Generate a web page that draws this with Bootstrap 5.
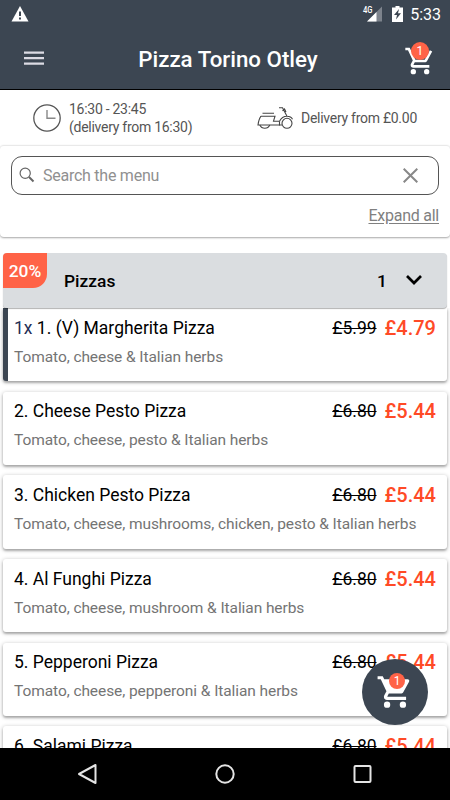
<!DOCTYPE html>
<html lang="en">
<head>
<meta charset="utf-8">
<meta name="viewport" content="width=device-width, initial-scale=1">
<title>Pizza Torino Otley</title>
<link href="https://cdn.jsdelivr.net/npm/bootstrap@5.3.0/dist/css/bootstrap.min.css" rel="stylesheet">
<style>
  body { font-family: Roboto, "Liberation Sans", sans-serif; color: #000; line-height: 1; }
  svg { display: block; flex: none; }
  .screen { width: 450px; height: 800px; background: #fff; }
  .topbar { height: 90px; background: #3c4652; border-bottom: 1px solid #000; }
  .status { height: 28px; padding: 0 9px 0 11px; font-size: 16px; }
  .clock { margin-left: 7px; line-height: 18px; padding-top: 1px; }
  .titlebar { height: 61px; padding: 0 14px 0 24px; }
  .title { font-size: 22.3px; font-weight: 500; line-height: 26px; padding: 1px 0 0 8px; }
  .cart-count { background: #ff6347; color: #fff; font-size: 12px; width: 18px; height: 18px; }
  .info { height: 55px; color: #555; font-size: 14px; letter-spacing: -.27px; line-height: 18px; padding: 0 33px; }
  .finder { height: 92px; padding: 10px 11px 0; border: solid #e9e9e9; border-width: 1px 0 0; border-radius: 4px; box-shadow: 0 1px 2px rgba(0,0,0,.35); }
  .search { height: 39px; border: 1px solid #555; border-radius: 11px; padding: 0 20px 0 7px; color: #909090; font-size: 16px; letter-spacing: -.25px; }
  .search .lens { margin-bottom: 2px; }
  .expand { color: #808080; font-size: 16px; letter-spacing: -.25px; line-height: 20px; margin-top: 11px; text-underline-offset: 2px; }
  .category { margin: 16px 3px 0; height: 55px; background: #dadde0; border-radius: 4px; padding: 2px 24px 0 61px; font-size: 17.400px; font-weight: 500; box-shadow: 0 1px 1px rgba(0,0,0,.3); z-index: 1; }
  .category svg { margin-top: -2px; }
  .discount { background: #ff6347; width: 44px; height: 35px; border-radius: 4px 0 14px 0; padding-top: 3px; }
  .menu { padding: 0 3px; gap: 10.3px; height: 440px; }
  .dish { flex: none; height: 73.4px; padding: 9.700px 11px 0 11px; border-radius: 3px; box-shadow: 0 1px 4px rgba(0,0,0,.3), 0 2px 2px rgba(0,0,0,.18); background: #fff; }
  .dish.chosen { border-left: 5px solid #3c4652; padding-left: 6px; border-radius: 0 0 3px 3px; }
  .dish-name { font-size: 17.500px; line-height: 20px; }
  .dish-info { font-size: 15.500px; line-height: 20px; margin-top: 9px; color: #747474; letter-spacing: -.08px; white-space: nowrap; }
  .qty { color: #1f2f55; }
  .now { font-size: 20px; font-weight: 500; color: #ff4a26; margin-left: 8px; }
  .fab { width: 66px; height: 66px; left: 362px; top: 659px; background: #3c4652; z-index: 3; }
  .fab .cart-count { width: 16px; height: 16px; left: 27px; top: 14px; }
  .bar-cart .cart-count { left: 7px; top: -3px; }
  .navkeys { height: 52px; z-index: 2; padding: 0 77px; }
</style>
<script src="https://cdn.jsdelivr.net/npm/bootstrap@5.3.0/dist/js/bootstrap.bundle.min.js"></script>
</head>
<body>
<div class="screen position-relative overflow-hidden d-flex flex-column">
  <header class="topbar text-white flex-shrink-0">
    <div class="status d-flex align-items-center justify-content-between">
      <svg width="18" height="16" viewBox="0 0 18 16"><path fill="#fff" d="M9 0 17.5 15.5H.5Z"/><path stroke="#3c4652" stroke-width="2" d="M9 5.5v4.5M9 11.5v2"/></svg>
      <div class="d-flex align-items-center">
        <svg width="24" height="18" viewBox="-2 0 24 18"><path fill="#7d838c" d="M20 1.500v15H5Z"/><path fill="#fff" d="M14.500 7v9.500H5Z"/><text x="1" y="8" font-size="8.500" font-weight="500" textLength="9.500" lengthAdjust="spacingAndGlyphs" fill="#fff" stroke="#3c4652" stroke-width="1" paint-order="stroke">4G</text></svg>
        <svg class="ms-2" width="11" height="16" viewBox="0 0 11 16"><path fill="#fff" d="M3.500 0h4v1.500H11V16H0V1.500h3.500Z"/><path fill="#3c4652" d="m7 3-5 6h3l-1 4.500 5-6.200H6Z"/></svg>
        <span class="clock">5:33</span>
      </div>
    </div>
    <div class="titlebar d-flex align-items-center justify-content-between">
      <svg width="20" height="15" viewBox="0 0 20 15"><path stroke="#dcdbe4" stroke-width="2.200" d="M0 1.700h20M0 7.200h20M0 12.700h20"/></svg>
      <h1 class="title mb-0">Pizza Torino Otley</h1>
      <div class="bar-cart position-relative">
        <svg class="mt-1" width="32" height="32" viewBox="0 0 24 24" fill="#fff"><path d="M7 18a2 2 0 1 0 0 4 2 2 0 0 0 0-4Zm10 0a2 2 0 1 0 0 4 2 2 0 0 0 0-4ZM7.170 14.750l.03-.12.900-1.630h7.450c.750 0 1.410-.410 1.750-1.030l3.860-7.010L19.420 4h-.010l-1.100 2-2.760 5H8.530L6.160 6l-1.890-4H1v2h2l3.600 7.590-1.350 2.450C5.090 14.320 5 14.650 5 15a2 2 0 0 0 2 2h12v-2H7.420a.25.25 0 0 1-.25-.25Z"/></svg>
        <span class="cart-count position-absolute rounded-circle d-flex align-items-center justify-content-center mt-1">1</span>
      </div>
    </div>
  </header>

  <div class="info d-flex align-items-center justify-content-between flex-shrink-0">
    <div class="d-flex align-items-center">
      <svg width="28" height="28" viewBox="0 0 28 28" fill="none" stroke="#555"><circle cx="14" cy="14" r="13.200" stroke-width="1.300"/><path stroke="#888" stroke-width="1.400" d="M14 6v8.300h8.500"/></svg>
      <div class="hours ps-2">16:30 - 23:45<br>(delivery from 16:30)</div>
    </div>
    <div class="d-flex align-items-center gap-2">
      <svg width="36" height="22" viewBox="0 0 36 22" fill="none" stroke="#444" stroke-width="1.100"><path d="M5.500 6.300h11.500M4 9.200h14l-1.500 5h6M4 9.200Q1.800 12 1 18h22M22.500 14.200q2.500-5 7.500-5 4 0 5.500 3M30 9.200 25.500.800H22M25.500 3.800l2-1.800 1.500 3"/><circle cx="30" cy="16.300" r="5"/><path d="M22.500 14.200v3.800h2.500M2.800 18q1.500 3.200 5 3.200t5-3.200"/></svg>
      <span class="fee">Delivery from £0.00</span>
    </div>
  </div>

  <section class="finder flex-shrink-0">
    <div class="search d-flex align-items-center">
      <svg class="lens" width="16" height="16" viewBox="0 0 16 16" fill="none" stroke="#666"><circle cx="6.200" cy="6.200" r="5.100" stroke-width="1.200"/><path stroke-width="1.900" d="m10 10 4.500 4.500"/></svg>
      <span class="hint ps-2 flex-grow-1">Search the menu</span>
      <svg width="15" height="15" viewBox="0 0 15 15"><path stroke="#888" stroke-width="2" d="m.7.7 13.600 13.600M14.300.7.7 14.300"/></svg>
    </div>
    <div class="expand text-end text-decoration-underline">Expand all</div>
  </section>

  <div class="category d-flex align-items-center position-relative flex-shrink-0">
    <span class="discount position-absolute top-0 start-0 text-white d-flex align-items-center justify-content-center">20%</span>
    <span class="flex-grow-1">Pizzas</span>
    <span>1</span>
    <svg class="ms-3" width="20" height="12" viewBox="0 0 20 12"><path fill="none" stroke="#000" stroke-width="2.700" d="m4 1 7 7 7-7"/></svg>
  </div>

  <main class="menu d-flex flex-column overflow-hidden">
    <article class="dish chosen">
      <div class="d-flex dish-name"><span class="flex-grow-1"><span class="qty">1x</span> 1. (V) Margherita Pizza</span><s class="was">£5.99</s><span class="now">£4.79</span></div>
      <div class="dish-info">Tomato, cheese &amp; Italian herbs</div>
    </article>
    <article class="dish">
      <div class="d-flex dish-name"><span class="flex-grow-1">2. Cheese Pesto Pizza</span><s class="was">£6.80</s><span class="now">£5.44</span></div>
      <div class="dish-info">Tomato, cheese, pesto &amp; Italian herbs</div>
    </article>
    <article class="dish">
      <div class="d-flex dish-name"><span class="flex-grow-1">3. Chicken Pesto Pizza</span><s class="was">£6.80</s><span class="now">£5.44</span></div>
      <div class="dish-info">Tomato, cheese, mushrooms, chicken, pesto &amp; Italian herbs</div>
    </article>
    <article class="dish">
      <div class="d-flex dish-name"><span class="flex-grow-1">4. Al Funghi Pizza</span><s class="was">£6.80</s><span class="now">£5.44</span></div>
      <div class="dish-info">Tomato, cheese, mushroom &amp; Italian herbs</div>
    </article>
    <article class="dish">
      <div class="d-flex dish-name"><span class="flex-grow-1">5. Pepperoni Pizza</span><s class="was">£6.80</s><span class="now">£5.44</span></div>
      <div class="dish-info">Tomato, cheese, pepperoni &amp; Italian herbs</div>
    </article>
    <article class="dish">
      <div class="d-flex dish-name"><span class="flex-grow-1">6. Salami Pizza</span><s class="was">£6.80</s><span class="now">£5.44</span></div>
    </article>
  </main>

  <button class="fab position-absolute rounded-circle border-0 p-0 d-flex align-items-center justify-content-center">
    <svg width="38" height="38" viewBox="0 0 24 24" fill="#fff"><path d="M7 18a2 2 0 1 0 0 4 2 2 0 0 0 0-4Zm10 0a2 2 0 1 0 0 4 2 2 0 0 0 0-4ZM1 2v2h2l3.600 7.590-1.350 2.450C5.090 14.320 5 14.650 5 15a2 2 0 0 0 2 2h12v-2H7.420a.25.25 0 0 1-.22-.37L8.100 13h7.450c.750 0 1.410-.410 1.750-1.030l3.580-6.490A1 1 0 0 0 20 4H5.210l-.94-2Z"/></svg>
    <span class="cart-count position-absolute rounded-circle d-flex align-items-center justify-content-center">1</span>
  </button>

  <nav class="navkeys bg-black position-relative flex-shrink-0 mt-auto d-flex align-items-center justify-content-between">
    <svg width="21" height="22" viewBox="0 0 21 22"><path fill="none" stroke="#e4e4e4" stroke-width="2" stroke-linejoin="round" d="M2 11 18.500 2v18Z"/></svg>
    <svg width="20" height="20" viewBox="0 0 20 20"><circle cx="10" cy="10" r="8.700" fill="none" stroke="#e4e4e4" stroke-width="2"/></svg>
    <svg width="21" height="20" viewBox="0 0 21 20"><rect x="2.500" y="2" width="16" height="16" rx="1" fill="none" stroke="#e4e4e4" stroke-width="2"/></svg>
  </nav>
</div>
</body>
</html>
